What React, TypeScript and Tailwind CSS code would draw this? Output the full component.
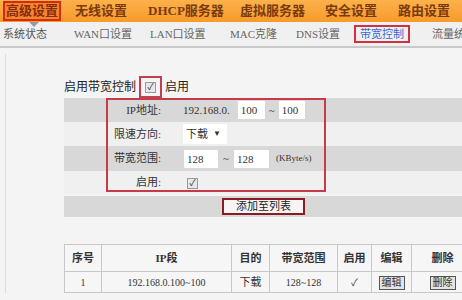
import React from 'react';

const font = { fontFamily: '"Liberation Serif", "Noto Sans CJK SC", serif' };

// label + slot width (distance to the next tab's left edge)
const topTabs: [string, string][] = [
  ['高级设置', 'w-[72px]'],
  ['无线设置', 'w-[73px]'],
  ['DHCP服务器', 'w-[92px]'],
  ['虚拟服务器', 'w-[85px]'],
  ['安全设置', 'w-[73px]'],
  ['路由设置', 'w-[64px]'],
];

const subTabs: [string, string][] = [
  ['系统状态', 'w-[71px]'],
  ['WAN口设置', 'w-[76px]'],
  ['LAN口设置', 'w-[80px]'],
  ['MAC克隆', 'w-[66px]'],
  ['DNS设置', 'w-[58px]'],
  ['带宽控制', 'w-[78px]'],
  ['流量统计', 'w-[60px]'],
];

function Check() {
  return (
    <span className="inline-flex h-[11px] w-[11px] items-center justify-center border border-[#9a9a9a] bg-[#e8e8ec] text-[9px] leading-none text-[#333]">
      ✓
    </span>
  );
}

export default function App() {
  return (
    <div className="h-[300px] w-[462px] overflow-hidden bg-[#f4f4f4] text-[11px] text-[#333]" style={font}>
      {/* Top nav */}
      <div className="flex h-[22px] items-center overflow-hidden whitespace-nowrap bg-gradient-to-b from-[#fcb14a] to-[#f79a2a] pl-[3px] text-[13px] font-bold text-[#7a3a10]">
        {topTabs.map(([t, w], i) => (
          <div key={t} className={'flex shrink-0 ' + w}>
            <span
              className={
                i === 0
                  ? 'border-2 border-[#d42a1a] bg-[#f2862a] px-[1px] leading-[16px] text-[#8a2a10]'
                  : 'leading-[16px]'
              }
            >
              {t}
            </span>
          </div>
        ))}
      </div>

      {/* Sub nav */}
      <div className="relative flex h-[26px] items-center overflow-hidden whitespace-nowrap border-b-2 border-[#c8c8c8] bg-[#f0f0f0] pl-[3px] text-[11px] text-[#666]">
        <span className="absolute left-[29px] top-0 h-0 w-0 border-x-[5px] border-t-[5px] border-x-transparent border-t-[#999]" />
        {subTabs.map(([t, w], i) => (
          <div key={t} className={'flex shrink-0 ' + w}>
            <span
              className={
                i === 5
                  ? 'border-2 border-[#d03040] px-[4px] leading-[14px] text-[#3a6ad0]'
                  : i === 0
                  ? 'text-[#555]'
                  : ''
              }
            >
              {t}
            </span>
          </div>
        ))}
      </div>

      {/* Body */}
      <div className="ml-[5px] mt-[6px] border-l border-[#dcdcdc] pl-[58px] pt-[22px]">
        <div className="flex h-[22px] items-center gap-[3px]">
          <span className="text-[12px] text-[#222]">启用带宽控制</span>
          <span className="flex h-[22px] w-[23px] items-center justify-center border-2 border-[#c04050]">
            <Check />
          </span>
          <span className="text-[12px] text-[#222]">启用</span>
        </div>

        <div className="relative">
          <div className="absolute left-[42px] top-0 h-[94px] w-[220px] border-2 border-[#c83a48]" />
          <div className="flex h-[24px] items-center bg-[#d8d8d8]">
            <div className="w-[99px] pr-[2px] text-right">IP地址:</div>
            <div className="ml-[20px] flex items-center">
              <span>192.168.0.</span>
              <span className="ml-[8px] h-[18px] w-[27px] bg-white pl-[3px] leading-[18px]">100</span>
              <span className="mx-[4px]">~</span>
              <span className="h-[18px] w-[26px] bg-white pl-[3px] leading-[18px]">100</span>
            </div>
          </div>
          <div className="flex h-[24px] items-center bg-[#f0f0f0]">
            <div className="w-[99px] pr-[2px] text-right">限速方向:</div>
            <div className="ml-[20px] flex h-[20px] w-[44px] items-center bg-white pl-[3px]">
              下载 <span className="ml-[5px] text-[8px]">▼</span>
            </div>
          </div>
          <div className="flex h-[25px] items-center bg-[#d8d8d8]">
            <div className="w-[99px] pr-[2px] text-right">带宽范围:</div>
            <div className="ml-[21px] flex items-center">
              <span className="h-[18px] w-[34px] bg-white pl-[3px] leading-[18px]">128</span>
              <span className="mx-[5px]">~</span>
              <span className="h-[18px] w-[35px] bg-white pl-[3px] leading-[18px]">128</span>
              <span className="ml-[7px] text-[9px]">(KByte/s)</span>
            </div>
          </div>
          <div className="flex h-[23px] items-center bg-[#f0f0f0]">
            <div className="w-[99px] pr-[2px] text-right">启用:</div>
            <div className="ml-[24px]">
              <Check />
            </div>
          </div>
        </div>

        <div className="mt-[2px] flex h-[21px] items-center bg-[#d8d8d8]">
          <button className="ml-[158px] h-[17px] w-[83px] border-2 border-[#8a1a24] bg-[#f8f4f4] text-[11px] leading-[13px] text-[#222]">
            添加至列表
          </button>
        </div>

        {/* Table */}
        <table className="mt-[27px] w-[410px] border-collapse bg-[#f6f6f6] text-center">
          <thead>
            <tr className="h-[27px] font-bold text-[#333]">
              <th className="w-[37px] border border-[#c8c8c8]">序号</th>
              <th className="w-[130px] border border-[#c8c8c8]">IP段</th>
              <th className="w-[38px] border border-[#c8c8c8]">目的</th>
              <th className="w-[68px] border border-[#c8c8c8]">带宽范围</th>
              <th className="w-[34px] border border-[#c8c8c8]">启用</th>
              <th className="w-[40px] border border-[#c8c8c8]">编辑</th>
              <th className="border border-[#c8c8c8]">删除</th>
            </tr>
          </thead>
          <tbody>
            <tr className="h-[21px] text-[10px]">
              <td className="border border-[#c8c8c8]">1</td>
              <td className="border border-[#c8c8c8]">192.168.0.100~100</td>
              <td className="border border-[#c8c8c8] text-[11px]">下载</td>
              <td className="border border-[#c8c8c8]">128~128</td>
              <td className="border border-[#c8c8c8]">✓</td>
              <td className="border border-[#c8c8c8]">
                <span className="inline-block border border-[#555] bg-[#e4e4e4] px-[2px] leading-[12px]">编辑</span>
              </td>
              <td className="border border-[#c8c8c8]">
                <span className="inline-block border border-[#555] bg-[#e4e4e4] px-[2px] leading-[12px]">删除</span>
              </td>
            </tr>
          </tbody>
        </table>
      </div>
    </div>
  );
}
